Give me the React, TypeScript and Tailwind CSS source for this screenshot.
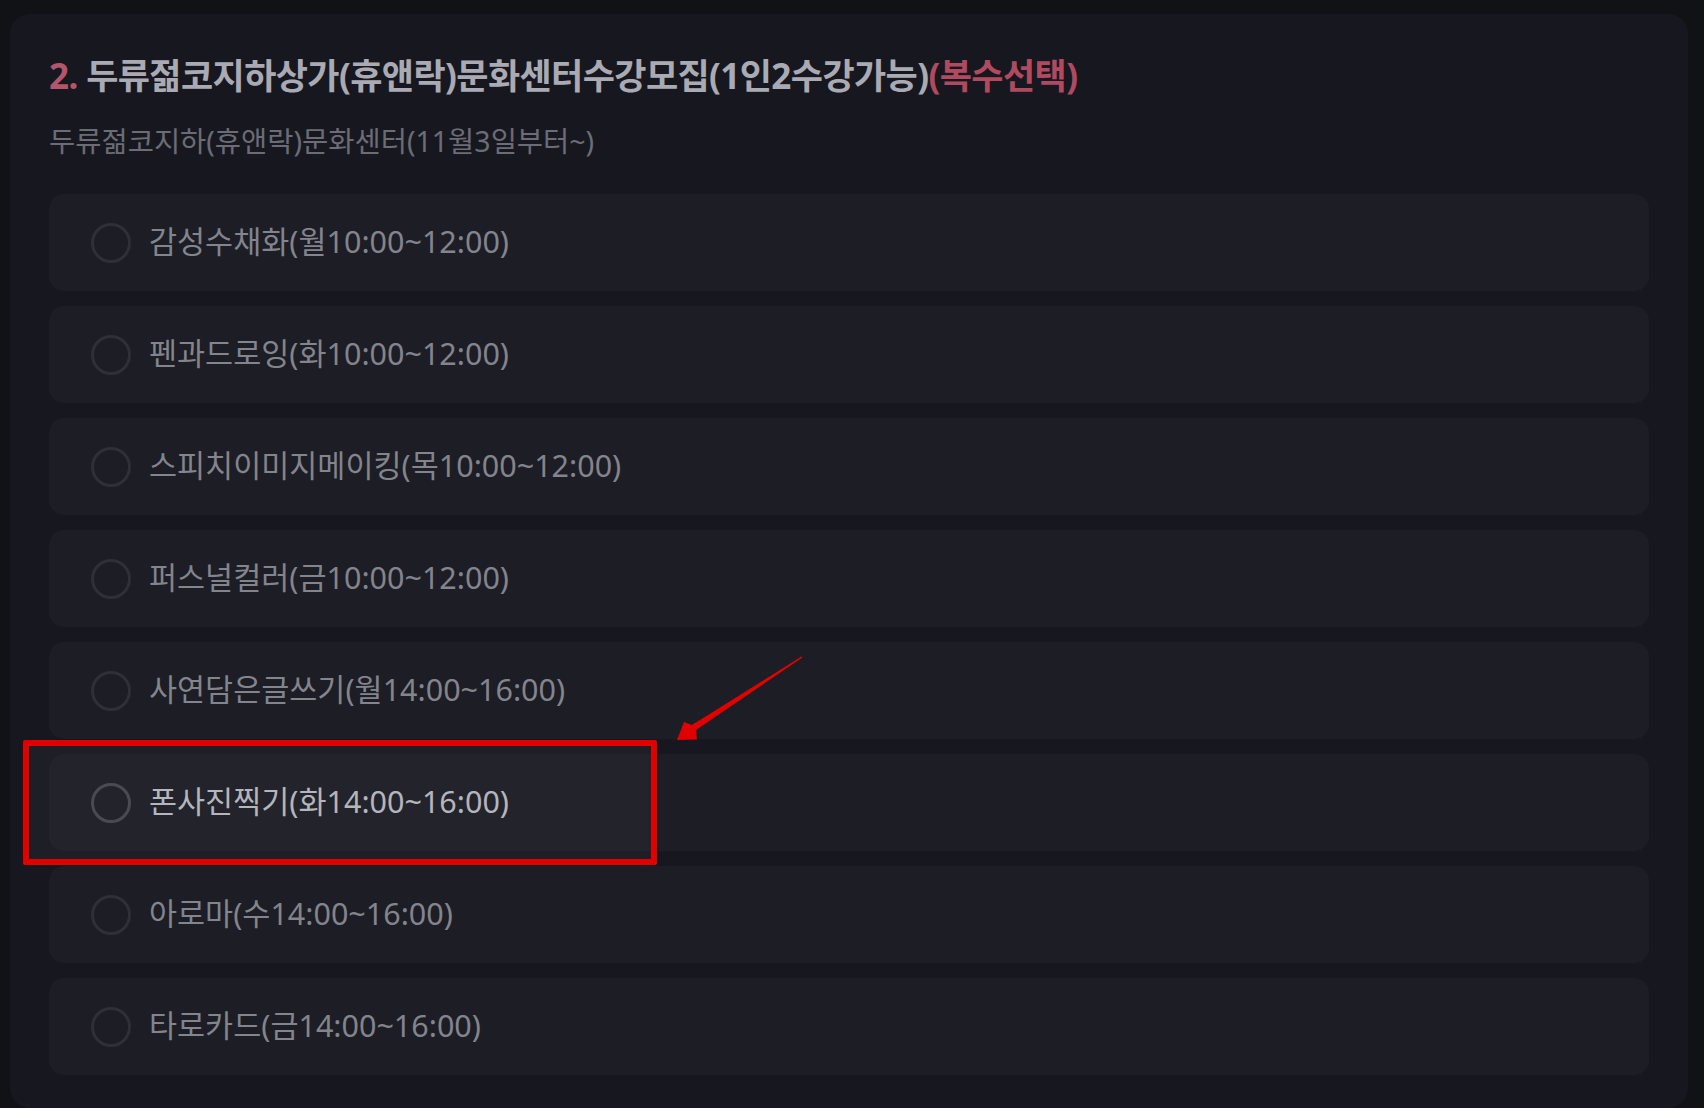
import React from 'react'

const options = [
  '감성수채화(월10:00~12:00)',
  '펜과드로잉(화10:00~12:00)',
  '스피치이미지메이킹(목10:00~12:00)',
  '퍼스널컬러(금10:00~12:00)',
  '사연담은글쓰기(월14:00~16:00)',
  '폰사진찍기(화14:00~16:00)',
  '아로마(수14:00~16:00)',
  '타로카드(금14:00~16:00)',
]

const font = { fontFamily: '"Noto Sans", "Noto Sans CJK KR", sans-serif' }

export default function App() {
  return (
    <div className="relative min-h-screen bg-[#111216] pt-[14px] pl-[10px] pr-[16px]" style={font}>
      <div className="rounded-[20px] bg-[#17181f] px-[39px] pt-[43px] pb-[33px]">
        {/* Question title */}
        <h2 className="h-[38px] text-[35px] leading-[38px] font-bold tracking-[-0.6px] text-[#a9aab3] whitespace-nowrap">
          <span className="text-[#b4566b]">2. </span>
          두류젊코지하상가(휴앤락)문화센터수강모집(1인2수강가능)
          <span className="text-[#b04a60]">(복수선택)</span>
        </h2>
        <p className="mt-[30px] h-[32px] text-[28.5px] leading-[32px] text-[#6b6c75] whitespace-nowrap">
          두류젊코지하(휴앤락)문화센터(11월3일부터~)
        </p>

        {/* Options */}
        <div className="mt-[37px] flex flex-col gap-[15px]">
          {options.map((label, i) => {
            const active = i === 5
            return (
              <label
                key={label}
                className="flex h-[97px] items-center gap-[18px] rounded-[15px] bg-[#1c1d25] pl-[42px]"
              >
                <span
                  className={`h-[40px] w-[40px] shrink-0 rounded-full border-[3px] ${
                    active ? 'border-[#44454f]' : 'border-[#2e2f38]'
                  }`}
                />
                <span
                  className={`-mt-[4px] text-[30.5px] leading-[40px] whitespace-nowrap ${
                    active ? 'text-[#b2b3bb]' : 'text-[#83848c]'
                  }`}
                >
                  {label}
                </span>
              </label>
            )
          })}
        </div>
      </div>

      {/* Annotation: red box */}
      <div className="pointer-events-none absolute left-[23px] top-[740px] h-[125px] w-[634px] rounded-[2px] border-[6px] border-[#e00000] bg-white/[0.03]" />

      {/* Annotation: arrow */}
      <svg className="pointer-events-none absolute left-0 top-0" width="1704" height="1108">
        <polygon
          points="802.5,657.5 801.5,656.5 692,725 684,722 677,740 697,739.5 696,730"
          fill="#e00000"
        />
      </svg>
    </div>
  )
}
